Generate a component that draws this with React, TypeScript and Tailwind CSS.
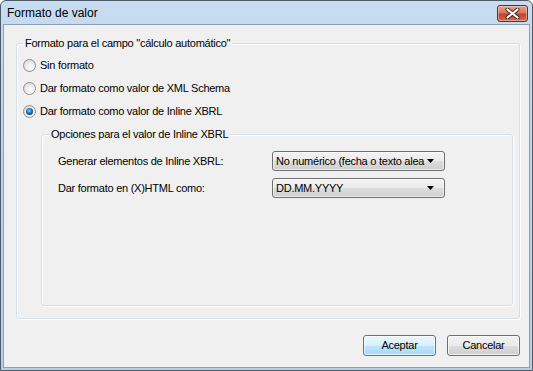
import React from "react";

function Radio({ checked }: { checked?: boolean }) {
  return (
    <span className="w-[13px] h-[13px] rounded-full border border-[#8e8f8f] bg-[radial-gradient(circle_at_65%_70%,#ffffff_0%,#eeeeee_45%,#d2d2d2_100%)] flex items-center justify-center shrink-0">
      {checked && (
        <span className="w-[7px] h-[7px] rounded-full bg-[radial-gradient(circle_at_45%_40%,#a6e2fb_0%,#2f8fd2_30%,#0d457f_70%,#082f5c_100%)]" />
      )}
    </span>
  );
}

function Select({ text }: { text: string }) {
  return (
    <div className="w-[173px] h-[20px] rounded-[3px] border border-[#707070] bg-[linear-gradient(to_bottom,#f3f3f3_0%,#ebebeb_50%,#dddddd_51%,#cfcfcf_100%)] flex items-center justify-between pl-[3px] pr-[10px] shadow-[inset_0_0_0_1px_rgba(255,255,255,0.6)]">
      <span className="whitespace-nowrap text-[11px] leading-[13px] text-black">{text}</span>
      <svg width="7" height="4" viewBox="0 0 7 4" className="shrink-0">
        <path d="M0 0H7L3.5 4Z" fill="#000" />
      </svg>
    </div>
  );
}

function Button({ label, def }: { label: string; def?: boolean }) {
  return (
    <div
      className={
        def
          ? "w-[73px] h-[21px] rounded-[3px] border border-[#3c7fb1] bg-[linear-gradient(to_bottom,#eaf6fd_0%,#d9f0fc_50%,#bee6fd_51%,#a7d9f5_100%)] shadow-[inset_0_0_0_1px_rgba(255,255,255,0.7)] flex items-center justify-center text-[11px] text-black"
          : "w-[73px] h-[21px] rounded-[3px] border border-[#707070] bg-[linear-gradient(to_bottom,#f2f2f2_0%,#ebebeb_50%,#dddddd_51%,#cfcfcf_100%)] shadow-[inset_0_0_0_1px_rgba(255,255,255,0.7)] flex items-center justify-center text-[11px] text-black"
      }
    >
      {label}
    </div>
  );
}

export default function App() {
  return (
    <div className="w-[533px] h-[371px] flex flex-col rounded-t-[6px] border border-[#4f5b68] bg-[linear-gradient(to_bottom,#c7dcf1_0%,#bcd3eb_40%,#b6cee8_100%)] font-['Liberation_Sans',Arial,sans-serif]">
      <div className="h-[23px] flex items-start justify-between pl-[6px] pr-[4px]">
        <span className="text-[12px] leading-[14px] mt-[5px] text-black">Formato de valor</span>
        <div className="mt-[4px] w-[31px] h-[17px] rounded-[3px] border border-[#6b2a25] bg-[linear-gradient(to_bottom,#e8a493_0%,#d7745f_45%,#c2422c_55%,#d26a4c_100%)] shadow-[inset_0_0_0_1px_rgba(255,220,210,0.5)] flex items-center justify-center">
          <svg width="15" height="11" viewBox="0 0 15 11">
            <path d="M2.5 1.5L12.5 9.5M12.5 1.5L2.5 9.5" stroke="#4a2420" strokeWidth="4" strokeLinecap="round" />
            <path d="M2.5 1.5L12.5 9.5M12.5 1.5L2.5 9.5" stroke="#ffffff" strokeWidth="2.2" strokeLinecap="round" />
          </svg>
        </div>
      </div>
      <div className="flex-1 mx-[2px] mb-[2px] border border-[#8aa0b9] bg-[#f0f0f0] flex flex-col pl-[12px] pr-[9px] pt-[12px] text-[11px] leading-[13px] tracking-[-0.25px] text-black">
        <fieldset className="h-[282px] border border-[#d5dfe5] rounded-[3px] px-[6px] shadow-[inset_1px_1px_0_#ffffff,1px_1px_0_#ffffff]">
          <legend className="px-[2px] bg-[#f0f0f0] leading-[13px]">Formato para el campo "cálculo automático"</legend>
          <div className="flex flex-col gap-[10px] mt-[9px]">
            <div className="flex items-center gap-[4px]">
              <Radio />
              <span>Sin formato</span>
            </div>
            <div className="flex items-center gap-[4px]">
              <Radio />
              <span>Dar formato como valor de XML Schema</span>
            </div>
            <div className="flex items-center gap-[4px]">
              <Radio checked />
              <span>Dar formato como valor de Inline XBRL</span>
            </div>
          </div>
          <fieldset className="mt-[10px] ml-[18px] h-[178px] border border-[#d5dfe5] rounded-[3px] px-[8px] shadow-[inset_1px_1px_0_#ffffff,1px_1px_0_#ffffff]">
            <legend className="px-[1px] bg-[#f0f0f0] leading-[13px]">Opciones para el valor de Inline XBRL</legend>
            <div className="grid grid-cols-[214px_173px] gap-y-[7px] items-center mt-[10px] pl-[8px]">
              <span>Generar elementos de Inline XBRL:</span>
              <Select text="No numérico (fecha o texto alea" />
              <span>Dar formato en (X)HTML como:</span>
              <Select text="DD.MM.YYYY" />
            </div>
          </fieldset>
        </fieldset>
        <div className="flex justify-end gap-[11px] mt-[16px]">
          <Button label="Aceptar" def />
          <Button label="Cancelar" />
        </div>
      </div>
    </div>
  );
}
